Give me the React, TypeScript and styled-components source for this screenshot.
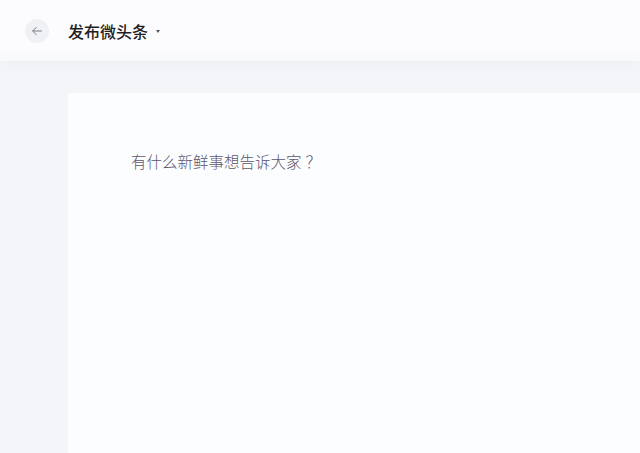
import styled, { createGlobalStyle } from 'styled-components'

const GlobalStyle = createGlobalStyle`
  html, body {
    margin: 0;
    padding: 0;
    background: #f4f5f8;
    font-family: "Noto Sans CJK SC", "Noto Sans", sans-serif;
  }
`

const Page = styled.div`
  display: flex;
  flex-direction: column;
  width: 640px;
  height: 453px;
  overflow: hidden;
  background: #f4f5f8;
`

const Header = styled.div`
  display: flex;
  align-items: center;
  height: 61px;
  padding-left: 25px;
  background: linear-gradient(#fcfcfe 0%, #fcfcfe 75%, #f8f9fb 100%);
  box-shadow: 0 6px 16px rgb(0 0 0 / 2.5%);
  position: relative;
  z-index: 1;
`

const BackButton = styled.button`
  display: flex;
  align-items: center;
  justify-content: center;
  width: 24px;
  height: 24px;
  padding: 0;
  margin-right: 19px;
  background: #f0f1f4;
  border: none;
  border-radius: 50%;
  color: #7a7c85;
`

const Title = styled.div`
  display: flex;
  align-items: center;
  gap: 8px;
  font-size: 16px;
  font-weight: 500;
  color: #1f1f24;
`

const Caret = styled.span`
  width: 0;
  height: 0;
  margin-top: 2px;
  border-left: 2.5px solid transparent;
  border-right: 2.5px solid transparent;
  border-top: 3px solid #55565c;
`

const Body = styled.div`
  display: flex;
  flex: 1;
  padding: 32px 0 0 68px;
`

const Card = styled.div`
  flex: 1;
  padding: 58px 0 0 63px;
  background: #fcfdfe;
`

const Placeholder = styled.div`
  font-size: 15.5px;
  line-height: 20px;
  font-weight: 300;
  color: #5d566c;
`

const Mark = styled.span`
  margin-left: 4px;
`

export default function App() {
  return (
    <Page>
      <GlobalStyle />
      <Header>
        <BackButton>
          <svg width="12" height="12" viewBox="0 0 12 12" fill="none">
            <path d="M10.5 6H1.8M5.2 2.5L1.7 6l3.5 3.5" stroke="currentColor" strokeWidth="1" strokeLinecap="round" strokeLinejoin="round" />
          </svg>
        </BackButton>
        <Title>
          发布微头条
          <Caret />
        </Title>
      </Header>
      <Body>
        <Card>
          <Placeholder>
            有什么新鲜事想告诉大家<Mark>？</Mark>
          </Placeholder>
        </Card>
      </Body>
    </Page>
  )
}
